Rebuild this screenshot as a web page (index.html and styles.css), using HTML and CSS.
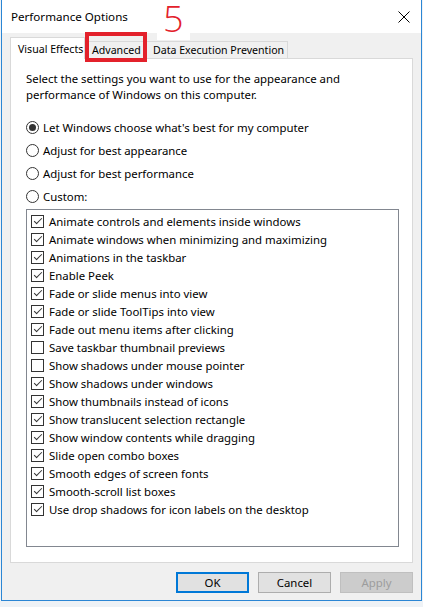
FILE: index.html
```html
<!DOCTYPE html>
<html>
<head>
<meta charset="utf-8">
<link rel="stylesheet" href="styles.css">
</head>
<body>
<div class="window">
  <div class="titlebar">
    <span class="title">Performance Options</span>
    <svg class="close" width="12" height="12" viewBox="0 0 12 12"><path d="M0.5 0.5L11.5 11.5M11.5 0.5L0.5 11.5" stroke="#000" stroke-width="1" fill="none"/></svg>
  </div>
  <div class="body">
    <div class="tabs">
      <div class="tab selected">Visual Effects</div>
      <div class="tab">Advanced</div>
      <div class="tab">Data Execution Prevention</div>
    </div>
    <div class="panel">
      <p class="desc">Select the settings you want to use for the appearance and performance of Windows on this computer.</p>
      <div class="radios">
        <div class="radio-row"><span class="radio on"></span>Let Windows choose what's best for my computer</div>
        <div class="radio-row"><span class="radio"></span>Adjust for best appearance</div>
        <div class="radio-row"><span class="radio"></span>Adjust for best performance</div>
        <div class="radio-row"><span class="radio"></span>Custom:</div>
      </div>
      <div class="listbox">
        <div class="cb-row"><span class="cb on"></span>Animate controls and elements inside windows</div>
        <div class="cb-row"><span class="cb on"></span>Animate windows when minimizing and maximizing</div>
        <div class="cb-row"><span class="cb on"></span>Animations in the taskbar</div>
        <div class="cb-row"><span class="cb on"></span>Enable Peek</div>
        <div class="cb-row"><span class="cb on"></span>Fade or slide menus into view</div>
        <div class="cb-row"><span class="cb on"></span>Fade or slide ToolTips into view</div>
        <div class="cb-row"><span class="cb on"></span>Fade out menu items after clicking</div>
        <div class="cb-row"><span class="cb"></span>Save taskbar thumbnail previews</div>
        <div class="cb-row"><span class="cb"></span>Show shadows under mouse pointer</div>
        <div class="cb-row"><span class="cb on"></span>Show shadows under windows</div>
        <div class="cb-row"><span class="cb on"></span>Show thumbnails instead of icons</div>
        <div class="cb-row"><span class="cb on"></span>Show translucent selection rectangle</div>
        <div class="cb-row"><span class="cb on"></span>Show window contents while dragging</div>
        <div class="cb-row"><span class="cb on"></span>Slide open combo boxes</div>
        <div class="cb-row"><span class="cb on"></span>Smooth edges of screen fonts</div>
        <div class="cb-row"><span class="cb on"></span>Smooth-scroll list boxes</div>
        <div class="cb-row"><span class="cb on"></span>Use drop shadows for icon labels on the desktop</div>
      </div>
    </div>
    <div class="buttons">
      <button class="btn default">OK</button>
      <button class="btn">Cancel</button>
      <button class="btn disabled">Apply</button>
    </div>
  </div>
  <div class="annot-box"></div>
  <div class="annot-num">5</div>
</div>
</body>
</html>
```

FILE: styles.css
```css
html, body {
  margin: 0;
  padding: 0;
  background: #eef2f6;
}
body {
  font-family: "Noto Sans", "Open Sans", sans-serif;
  font-size: 11.4px;
  color: #000;
}
.window {
  position: relative;
  margin-left: 1px;
  width: 419px;
  height: 600px;
  border: 1px solid #2b86d4;
  border-top: none;
  background: #f0f0f0;
  display: flex;
  flex-direction: column;
}
.titlebar {
  height: 33px;
  background: #fff;
  display: flex;
  align-items: center;
  justify-content: space-between;
  padding: 0 11px 0 9px;
}
.title {
  line-height: 16px;
  margin-top: 1px;
  font-size: 11.6px;
}
.close {
  display: block;
}
.body {
  flex: 1;
  display: flex;
  flex-direction: column;
  padding: 0 8px 0 8px;
}
.tabs {
  display: flex;
  align-items: flex-end;
  height: 25px;
  position: relative;
  z-index: 1;
  font-size: 10.6px;
}
.tab {
  height: 17px;
  line-height: 16px;
  border: 1px solid #d9d9d9;
  border-bottom: none;
  border-left: none;
  padding: 0 3px 0 6px;
  background: #f0f0f0;
  box-sizing: border-box;
  white-space: nowrap;
}
.tab.selected {
  height: 22px;
  width: 75px;
  border-left: 1px solid #d9d9d9;
  background: #fff;
  padding: 3px 0 0 7px;
  margin-bottom: -1px;
}
.tab:nth-child(2) {
  width: 62px;
  padding-left: 7px;
}
.panel {
  height: 505px;
  box-sizing: border-box;
  background: #fff;
  border: 1px solid #d9d9d9;
  padding: 12px 13px 15px 15px;
  display: flex;
  flex-direction: column;
}
.desc {
  margin: 0;
  line-height: 16px;
}
.radios {
  margin-top: 13px;
}
.radio-row {
  height: 23px;
  display: flex;
  align-items: center;
  gap: 4px;
}
.radio {
  width: 13px;
  height: 13px;
  box-sizing: border-box;
  border: 1px solid #333;
  border-radius: 50%;
  background: #fff;
  display: flex;
  align-items: center;
  justify-content: center;
  flex: none;
}
.radio.on::after {
  content: "";
  width: 7px;
  height: 7px;
  border-radius: 50%;
  background: #333;
}
.listbox {
  flex: 1;
  margin-top: 1px;
  border: 1px solid #828790;
  padding: 2px 0 0 4px;
}
.cb-row {
  height: 18px;
  display: flex;
  align-items: center;
  gap: 5px;
}
.cb {
  width: 13px;
  height: 13px;
  box-sizing: border-box;
  border: 1px solid #333;
  background: #fff;
  flex: none;
  position: relative;
}
.cb.on::after {
  content: "";
  position: absolute;
  left: 3.5px;
  top: 0px;
  width: 3px;
  height: 7px;
  border-right: 1px solid #333;
  border-bottom: 1px solid #333;
  transform: rotate(45deg);
}
.buttons {
  display: flex;
  justify-content: flex-end;
  gap: 9px;
  margin-top: 9px;
}
.btn {
  width: 73px;
  height: 21px;
  box-sizing: border-box;
  font-family: inherit;
  font-size: 11.4px;
  border: 1px solid #adadad;
  background: #e1e1e1;
  color: #000;
  padding: 0;
  margin: 0;
}
.btn.default {
  border: 2px solid #0078d7;
}
.btn.disabled {
  background: #cccccc;
  border-color: #bfbfbf;
  color: #9c9c9c;
}
.annot-box {
  position: absolute;
  left: 83px;
  top: 32px;
  width: 62px;
  height: 30px;
  box-sizing: border-box;
  border: 4px solid #e3212b;
  z-index: 2;
}
.annot-num {
  position: absolute;
  left: 155px;
  top: 0;
  padding: 0 6px 2px;
  background: #fff;
  color: #e3212b;
  font-family: "Open Sans", sans-serif;
  font-weight: 300;
  font-size: 36px;
  line-height: 38px;
  z-index: 2;
}
```
